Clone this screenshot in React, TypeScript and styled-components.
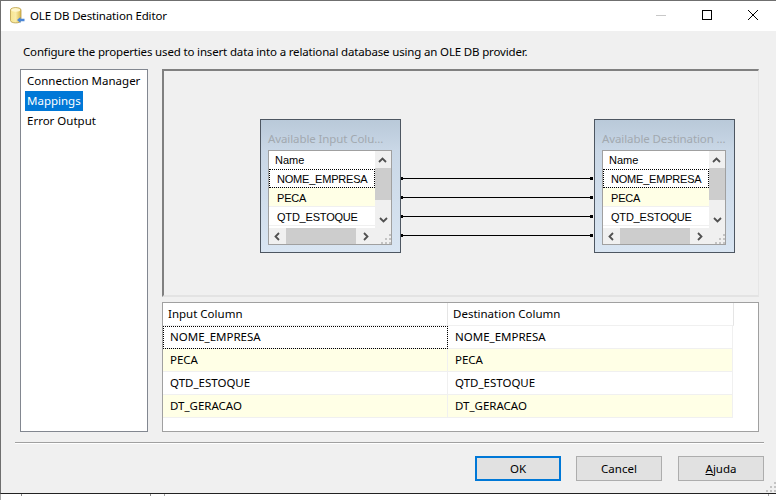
import React from "react";
import styled, { createGlobalStyle } from "styled-components";

const GlobalStyle = createGlobalStyle`
  html, body {
    margin: 0;
    padding: 0;
    height: 500px;
    overflow: hidden;
    background: #fff;
  }
  * {
    box-sizing: border-box;
  }
`;

const Page = styled.div`
  width: 776px;
  height: 500px;
  display: flex;
  flex-direction: column;
  font-family: "Noto Sans", "Open Sans", sans-serif;
  font-size: 11.5px;
  color: #000;
`;

const Dialog = styled.div`
  position: relative;
  height: 494px;
  display: flex;
  flex-direction: column;
  background: #f0f0f0;
  border-top: 1px solid #6f6f6f;
  border-left: 1px solid #6f6f6f;
  border-bottom: 1px solid #222;
`;

const BehindStrip = styled.div`
  height: 6px;
  background:
    linear-gradient(#8a8a8a, #8a8a8a) 20px 0 / 1px 2px no-repeat,
    linear-gradient(#8a8a8a, #8a8a8a) 149px 0 / 1px 2px no-repeat,
    linear-gradient(#a8a8a8, #a8a8a8) 163px 0 / 1px 2px no-repeat,
    linear-gradient(#a8a8a8, #a8a8a8) 767px 0 / 1px 2px no-repeat,
    #fff;
  border-left: 1px solid #a8a8a8;
`;

const TitleBar = styled.div`
  height: 30px;
  flex: none;
  display: flex;
  align-items: center;
  background: #fff;
  padding: 0 0 2px 9px;
`;

const TitleText = styled.span`
  margin-left: 5px;
  letter-spacing: -0.16px;
  white-space: nowrap;
`;

const WindowButtons = styled.div`
  margin-left: auto;
  display: flex;
`;

const WindowButton = styled.div`
  width: 46px;
  height: 28px;
  display: flex;
  align-items: center;
  justify-content: center;
`;

const Content = styled.div`
  flex: 1;
  display: flex;
  flex-direction: column;
`;

const Description = styled.div`
  height: 38px;
  padding: 13px 0 0 22px;
  line-height: 16px;
  letter-spacing: -0.16px;
  white-space: nowrap;
`;

const MainRow = styled.div`
  display: flex;
  gap: 14px;
  height: 363px;
  margin-left: 19px;
`;

const NavList = styled.div`
  width: 128px;
  background: #fff;
  border: 1px solid #828790;
  padding: 1px 0 0 4px;
  display: flex;
  flex-direction: column;
  align-items: flex-start;
`;

const NavItem = styled.div<{ $active?: boolean }>`
  height: 20px;
  line-height: 20px;
  padding: 0 2px;
  white-space: nowrap;
  background: ${(p) => (p.$active ? "#0078d7" : "transparent")};
  color: ${(p) => (p.$active ? "#fff" : "#000")};
`;

const RightColumn = styled.div`
  width: 597px;
  display: flex;
  flex-direction: column;
  gap: 5px;
`;

const Diagram = styled.div`
  height: 228px;
  display: flex;
  align-items: flex-start;
  padding: 48px 0 0 96px;
  border-style: solid;
  border-width: 2px 1px 2px 2px;
  border-color: #808080 #e6e6e6 #e3e3e3 #808080;
`;

const Node = styled.div`
  width: 141px;
  height: 134px;
  flex: none;
  padding: 0 7px;
  border: 1px solid #4d5661;
  background: linear-gradient(#b9c9d9 0, #c9d7e6 30px, #d9e5f2 100%);
`;

const NodeTitle = styled.div`
  height: 30px;
  line-height: 37px;
  color: #a2a9b0;
  letter-spacing: -0.1px;
  white-space: nowrap;
`;

const NodeList = styled.div`
  width: 124px;
  height: 95px;
  background: #fff;
  border: 1px solid #a0a0a0;
  display: grid;
  grid-template-columns: 106px 16px;
  grid-template-rows: 77px 16px;
  font-family: "Liberation Sans", Arial, sans-serif;
  font-size: 11px;
`;

const NodeRows = styled.div`
  overflow: hidden;
`;

const NodeHeader = styled.div`
  height: 18px;
  line-height: 18px;
  padding-left: 6px;
`;

const NodeRow = styled.div<{ $alt?: boolean; $focus?: boolean }>`
  height: 19px;
  line-height: 20px;
  padding-left: 8px;
  letter-spacing: -0.2px;
  white-space: nowrap;
  background: ${(p) => (p.$alt ? "#ffffe6" : "#fff")};
  border-bottom: 1px solid #f0f0f0;
  ${(p) => p.$focus && "outline: 1px dotted #000; outline-offset: -1px;"}
`;

const VScroll = styled.div`
  background: #f0f0f0;
  display: flex;
  flex-direction: column;
  align-items: center;
  justify-content: space-between;
  padding-top: 17px;
  position: relative;
`;

const VThumb = styled.div`
  width: 100%;
  height: 32px;
  background: #cdcdcd;
`;

const ScrollArrow = styled.svg`
  display: block;
  flex: none;
`;

const UpArrowSlot = styled.div`
  position: absolute;
  top: 6px;
  left: 3px;
`;

const DownArrowSlot = styled.div`
  margin-bottom: 5px;
`;

const HScroll = styled.div`
  background: #f0f0f0;
  display: flex;
  align-items: center;
  padding-left: 5px;
`;

const HThumb = styled.div`
  width: 70px;
  height: 100%;
  margin: 0 7px 0 6px;
  background: #cdcdcd;
`;

const ScrollCorner = styled.div`
  background: #f0f0f0;
  display: flex;
  align-items: flex-end;
  justify-content: flex-end;
`;

const Connectors = styled.div`
  width: 193px;
  flex: none;
  padding: 59px 1px 0 0;
  display: flex;
  flex-direction: column;
  gap: 18px;
`;

const Connector = styled.div`
  position: relative;
  height: 1px;
  background: #000;
  &::before {
    content: "";
    position: absolute;
    left: 0;
    top: -1px;
    width: 2px;
    height: 3px;
    background: #000;
  }
  &::after {
    content: "";
    position: absolute;
    right: 0;
    top: -1px;
    width: 3px;
    height: 3px;
    background: #000;
  }
`;

const MapGrid = styled.div`
  height: 130px;
  background: #fff;
  border: 1px solid #a0a0a0;
`;

const GridRow = styled.div<{ $alt?: boolean }>`
  display: grid;
  grid-template-columns: 285px 285px;
  height: 23px;
  background: ${(p) => (p.$alt ? "#ffffe6" : "#fff")};
  width: 570px;
`;

const GridCell = styled.div<{ $focus?: boolean }>`
  line-height: 22px;
  padding-left: 7px;
  white-space: nowrap;
  border-right: 1px solid #f0f0f0;
  border-bottom: 1px solid #f0f0f0;
  ${(p) => p.$focus && "outline: 1px dotted #000; outline-offset: -1px;"}
`;

const HeaderRow = styled.div`
  display: grid;
  grid-template-columns: 285px 286px;
  height: 23px;
  width: 571px;
`;

const HeaderCell = styled.div`
  line-height: 21px;
  padding-left: 5px;
  border-right: 1px solid #e5e5e5;
  border-bottom: 1px solid #f0f0f0;
`;

const Separator = styled.div`
  height: 2px;
  margin: 10px 12px 0 14px;
  border-top: 1px solid #a0a0a0;
  border-bottom: 1px solid #fff;
`;

const Footer = styled.div`
  display: flex;
  justify-content: flex-end;
  margin-top: 12px;
  padding-right: 12px;
`;

const DialogButton = styled.button<{ $primary?: boolean; $gap: number }>`
  width: 86px;
  height: 25px;
  margin-left: ${(p) => p.$gap}px;
  padding: 0;
  background: #e1e1e1;
  border: ${(p) => (p.$primary ? "2px solid #0078d7" : "1px solid #adadad")};
  font: inherit;
  color: #000;
`;

const Mnemonic = styled.span`
  text-decoration: underline;
`;

const Grip = styled.svg`
  position: absolute;
  right: 0;
  bottom: 1px;
`;

const rows = ["NOME_EMPRESA", "PECA", "QTD_ESTOQUE", "DT_GERACAO"];

const DbIcon = () => (
  <svg width="15" height="17" viewBox="0 0 15 17">
    <defs>
      <linearGradient id="can" x1="0" x2="1" y1="0" y2="0">
        <stop offset="0" stopColor="#f7e58e" />
        <stop offset="0.5" stopColor="#f9ecaa" />
        <stop offset="1" stopColor="#d9b84a" />
      </linearGradient>
    </defs>
    <path
      d="M0.5 3c0-3.2 10.5-3.2 10.5 0v10.5c0 3.2-10.5 3.2-10.5 0z"
      fill="url(#can)"
      stroke="#b79b45"
      strokeWidth="0.8"
    />
    <ellipse cx="5.75" cy="3" rx="4.5" ry="1.7" fill="#fdf6cf" />
    <path d="M7 13l3.5-3v1.8h4v2.4h-4v1.8z" fill="#4a86d8" />
  </svg>
);

const ChevronUp = () => (
  <ScrollArrow width="9" height="6" viewBox="0 0 9 6">
    <path d="M1 5l3.5-3.5L8 5" fill="none" stroke="#505050" strokeWidth="1.8" />
  </ScrollArrow>
);

const ChevronDown = () => (
  <ScrollArrow width="9" height="6" viewBox="0 0 9 6">
    <path d="M1 1l3.5 3.5L8 1" fill="none" stroke="#505050" strokeWidth="1.8" />
  </ScrollArrow>
);

const ChevronLeft = () => (
  <ScrollArrow width="6" height="9" viewBox="0 0 6 9">
    <path d="M5 1L1.5 4.5 5 8" fill="none" stroke="#505050" strokeWidth="1.8" />
  </ScrollArrow>
);

const ChevronRight = () => (
  <ScrollArrow width="6" height="9" viewBox="0 0 6 9">
    <path d="M1 1l3.5 3.5L1 8" fill="none" stroke="#505050" strokeWidth="1.8" />
  </ScrollArrow>
);

const GripDots = ({ color }: { color: string }) => (
  <g fill={color}>
    <rect x="8" y="0" width="2" height="2" />
    <rect x="4" y="4" width="2" height="2" />
    <rect x="8" y="4" width="2" height="2" />
    <rect x="0" y="8" width="2" height="2" />
    <rect x="4" y="8" width="2" height="2" />
    <rect x="8" y="8" width="2" height="2" />
  </g>
);

const ColumnNode = ({ title }: { title: string }) => (
  <Node>
    <NodeTitle>{title}</NodeTitle>
    <NodeList>
      <NodeRows>
        <NodeHeader>Name</NodeHeader>
        {rows.slice(0, 3).map((name, i) => (
          <NodeRow key={name} $alt={i === 1} $focus={i === 0}>
            {name}
          </NodeRow>
        ))}
      </NodeRows>
      <VScroll>
        <UpArrowSlot>
          <ChevronUp />
        </UpArrowSlot>
        <VThumb />
        <DownArrowSlot>
          <ChevronDown />
        </DownArrowSlot>
      </VScroll>
      <HScroll>
        <ChevronLeft />
        <HThumb />
        <ChevronRight />
      </HScroll>
      <ScrollCorner>
        <svg width="10" height="10" viewBox="0 0 10 10">
          <GripDots color="#c4c4c4" />
        </svg>
      </ScrollCorner>
    </NodeList>
  </Node>
);

const App: React.FC = () => {
  return (
    <Page>
      <GlobalStyle />
      <Dialog>
        <TitleBar>
          <DbIcon />
          <TitleText>OLE DB Destination Editor</TitleText>
          <WindowButtons>
            <WindowButton>
              <svg width="10" height="10" viewBox="0 0 10 10">
                <rect x="0" y="5" width="10" height="1" fill="#c8c8c8" />
              </svg>
            </WindowButton>
            <WindowButton>
              <svg width="10" height="10" viewBox="0 0 10 10">
                <rect x="0.5" y="0.5" width="9" height="9" fill="none" stroke="#000" />
              </svg>
            </WindowButton>
            <WindowButton>
              <svg width="10" height="10" viewBox="0 0 10 10">
                <path d="M0 0l10 10M10 0L0 10" stroke="#000" strokeWidth="1" />
              </svg>
            </WindowButton>
          </WindowButtons>
        </TitleBar>
        <Content>
          <Description>
            Configure the properties used to insert data into a relational database using an OLE DB provider.
          </Description>
          <MainRow>
            <NavList>
              <NavItem>Connection Manager</NavItem>
              <NavItem $active>Mappings</NavItem>
              <NavItem>Error Output</NavItem>
            </NavList>
            <RightColumn>
              <Diagram>
                <ColumnNode title="Available Input Colu..." />
                <Connectors>
                  {rows.map((name) => (
                    <Connector key={name} />
                  ))}
                </Connectors>
                <ColumnNode title="Available Destination ..." />
              </Diagram>
              <MapGrid>
                <HeaderRow>
                  <HeaderCell>Input Column</HeaderCell>
                  <HeaderCell>Destination Column</HeaderCell>
                </HeaderRow>
                {rows.map((name, i) => (
                  <GridRow key={name} $alt={i % 2 === 1}>
                    <GridCell $focus={i === 0}>{name}</GridCell>
                    <GridCell>{name}</GridCell>
                  </GridRow>
                ))}
              </MapGrid>
            </RightColumn>
          </MainRow>
          <Separator />
          <Footer>
            <DialogButton $primary $gap={0}>OK</DialogButton>
            <DialogButton $gap={15}>Cancel</DialogButton>
            <DialogButton $gap={16}>
              <Mnemonic>A</Mnemonic>juda
            </DialogButton>
          </Footer>
        </Content>
        <Grip width="10" height="10" viewBox="0 0 10 10">
          <GripDots color="#c4c4c4" />
        </Grip>
      </Dialog>
      <BehindStrip />
    </Page>
  );
};

export default App;
